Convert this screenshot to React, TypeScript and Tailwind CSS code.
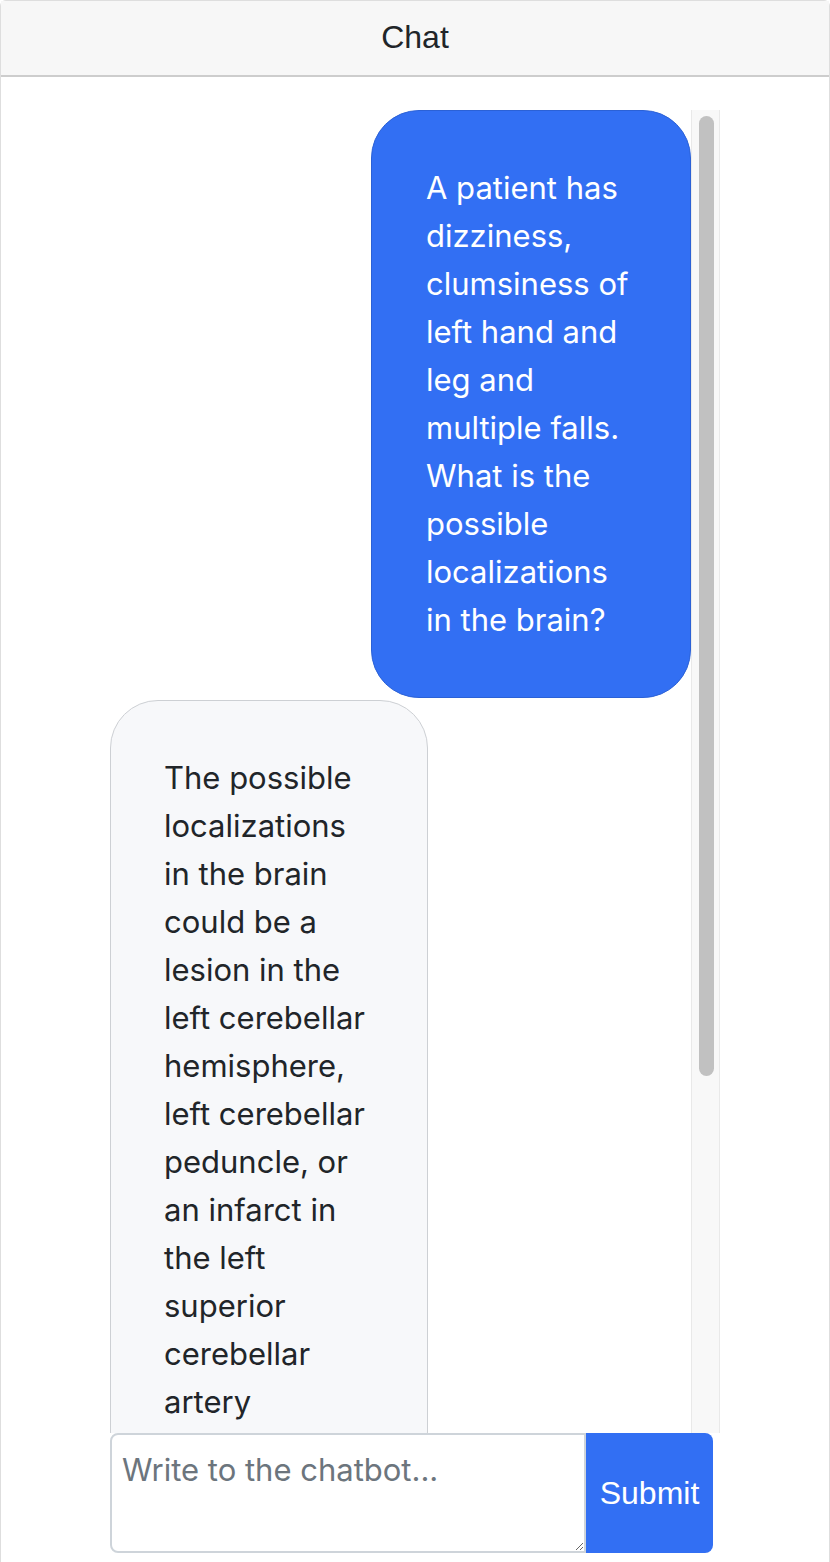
const userText =
  "A patient has dizziness, clumsiness of left hand and leg and multiple falls. What is the possible localizations in the brain?";
const botText =
  "The possible localizations in the brain could be a lesion in the left cerebellar hemisphere, left cerebellar peduncle, or an infarct in the left superior cerebellar artery";

function Bubble({ text, mine }: { text: string; mine: boolean }) {
  return (
    <div
      className={
        mine
          ? "w-[320px] shrink-0 self-end rounded-[48px] border border-[#2b61d6] bg-[#326ff3] py-[53px] pl-[54px] pr-[58px] text-white"
          : "mt-[2px] w-[318px] shrink-0 self-start rounded-[48px] border border-[#cdd0d4] bg-[#f7f8fa] py-[53px] pl-[53px] pr-[57px] text-[#212529]"
      }
    >
      <p className="text-[31px] leading-[48px] [font-family:Inter,'Noto_Sans',sans-serif]">{text}</p>
    </div>
  );
}

export default function App() {
  return (
    <div className="min-h-screen bg-white">
      <div className="rounded-t-[6px] border border-[#dedede]">
        <div className="flex h-[76px] items-center justify-center border-b-2 border-[#cdcdcd] bg-[#f7f7f7] pb-[2px] text-[32px] text-[#212529] [font-family:'Liberation_Sans',Arial,sans-serif]">
          Chat
        </div>
        <div className="flex flex-col items-center pt-[33px] pb-[20px]">
          <div className="w-[610px]">
            <div className="flex h-[1323px]">
              <div className="flex flex-1 flex-col overflow-hidden">
                <Bubble text={userText} mine />
                <Bubble text={botText} mine={false} />
              </div>
              <div className="w-[29px] border-x border-[#e9e9e9] bg-[#f8f8f8] pt-[6px] pl-[7px]">
                <div className="h-[960px] w-[15px] rounded-full bg-[#c1c1c1]"></div>
              </div>
            </div>
            <div className="flex h-[120px] w-[603px]">
              <textarea
                placeholder="Write to the chatbot..."
                className="h-full flex-1 rounded-l-[8px] border-2 border-[#ced4da] px-[10px] py-[11px] text-[31px] leading-[48px] text-[#212529] outline-none placeholder:text-[#6c757d] [font-family:Inter,'Noto_Sans',sans-serif]"
              ></textarea>
              <button className="h-full w-[127px] rounded-r-[8px] bg-[#326ff3] text-[32px] text-white [font-family:'Liberation_Sans',Arial,sans-serif]">
                Submit
              </button>
            </div>
          </div>
        </div>
      </div>
    </div>
  );
}
